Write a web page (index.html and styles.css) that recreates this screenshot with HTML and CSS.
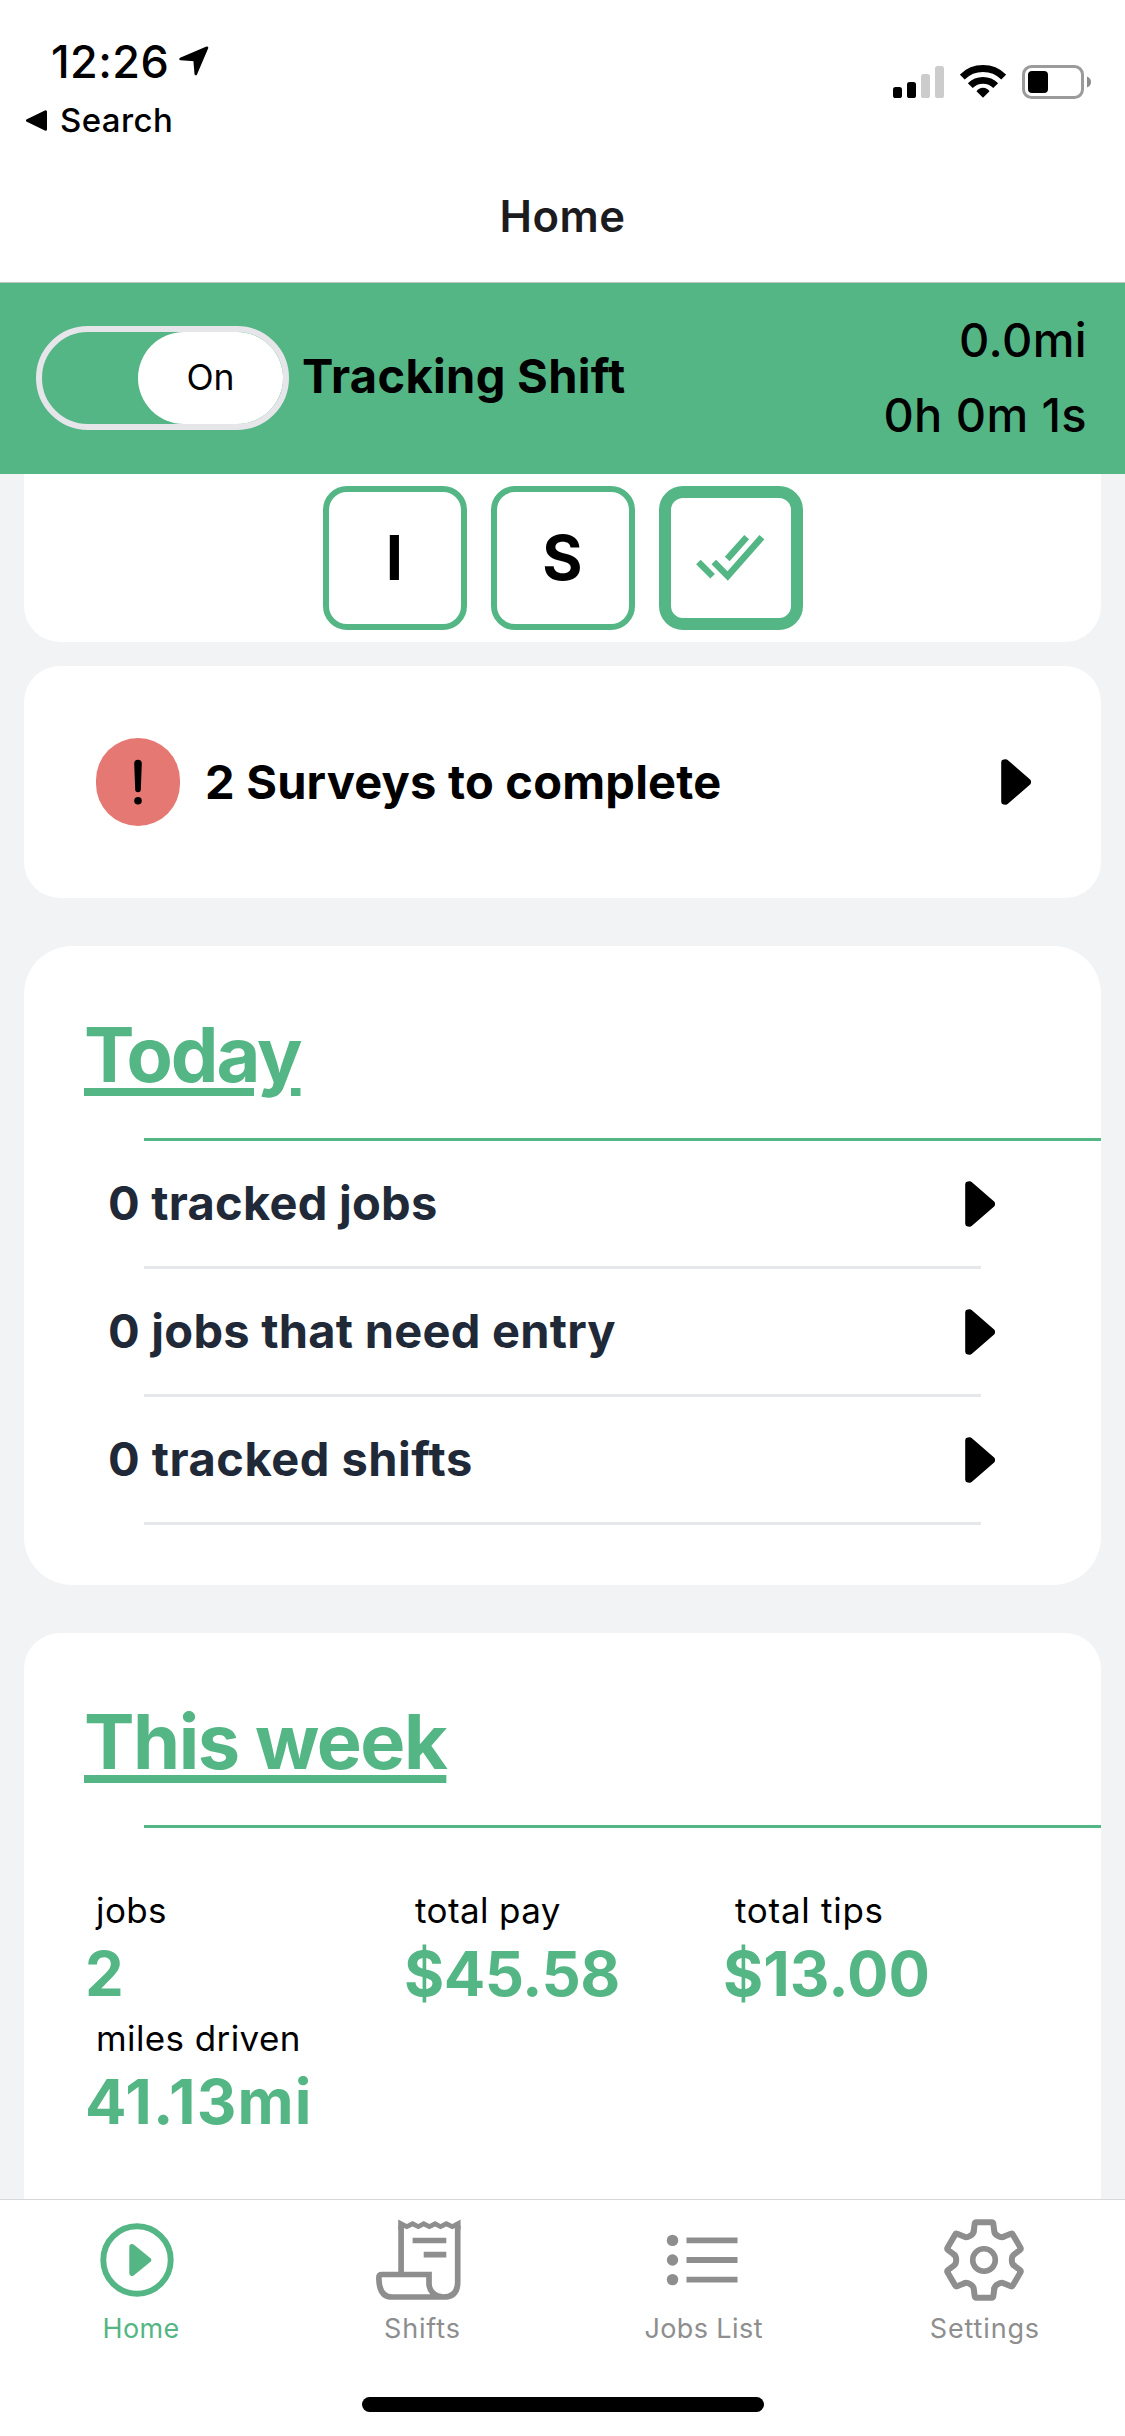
FILE: index.html
```
<!DOCTYPE html>
<html lang="en">
<head>
<meta charset="utf-8">
<title>Home</title>
<link rel="stylesheet" href="styles.css">
</head>
<body>
<svg class="defs" width="0" height="0">
  <symbol id="play" viewBox="0 0 30 46"><path d="M3 3.2L4.8 3L27 22.300Q27.6 23 27 23.700L4.800 43L3 42.8Z" stroke="currentColor" stroke-width="5.6" stroke-linejoin="round" fill="currentColor"/></symbol>
</svg>

<header class="header">
  <div class="status">
    <div class="status-left">
      <div class="clock">
        <span>12:26</span>
        <svg width="30" height="30" viewBox="0 0 30 30"><path d="M1.6 13L28 1.8L16.8 28L15.6 14Z" stroke="#000" stroke-width="2.6" stroke-linejoin="round"/></svg>
      </div>
      <div class="back">
        <svg width="21" height="21" viewBox="0 0 21 21"><path d="M1.5 10.5L19.5 1.8V19.2Z" stroke="#000" stroke-width="3" stroke-linejoin="round"/></svg>
        <span>Search</span>
      </div>
    </div>
    <div class="status-right">
      <svg width="51" height="32" viewBox="0 0 51 32"><rect y="21" width="9" height="11" rx="2.6"/><rect x="14" y="16" width="9" height="16" rx="2.6"/><rect x="28" y="8" width="9" height="24" rx="2.6" fill="#ccc"/><rect x="42" width="9" height="32" rx="2.6" fill="#ccc"/></svg>
      <svg width="46" height="33" viewBox="0 0 46 33"><g fill="none" stroke="#000" stroke-width="6.9"><path d="M2.3 12A29.5 29.5 0 0 1 43.7 12"/><path d="M10.3 20.6A18 18 0 0 1 35.7 20.6"/></g><path d="M23 32.8L16.5 26.3Q18.8 22.8 23 22.8T29.5 26.3Z"/></svg>
      <svg width="70" height="34" viewBox="0 0 70 34"><rect x="1.5" y="1.5" width="59" height="31" rx="8" fill="none" stroke="#9b9b9b" stroke-width="3"/><rect x="6" y="6" width="20" height="22" rx="4"/><path d="M65 11.5Q69 13 69 17T65 22.5Z" fill="#8c8c8c"/></svg>
    </div>
  </div>
  <h1 class="title">Home</h1>
</header>

<section class="tracker">
  <div class="toggle"><div class="knob">On</div></div>
  <div class="tracker-label">Tracking Shift</div>
  <div class="tracker-stats"><div>0.0mi</div><div>0h 0m 1s</div></div>
</section>

<main class="content">
  <section class="card quick">
    <div class="tile">I</div>
    <div class="tile">S</div>
    <div class="tile selected">
      <svg width="69" height="46" viewBox="0 0 69 46" fill="none" stroke="currentColor" stroke-width="6.5"><path d="M17.8 27L31.7 41L65.9 2.2"/><path d="M2.4 27L16.6 41.2"/><path d="M50.7 2.2L31.2 24"/></svg>
    </div>
  </section>

  <section class="card surveys">
    <div class="alert"><svg width="10" height="46" viewBox="0 0 10 46"><path d="M1.2 4.5A3.8 3.8 0 0 1 8.8 4.500L7.800 30.500A2.800 2.800 0 0 1 2.200 30.500Z"/><circle cx="5" cy="41.700" r="3.800"/></svg></div>
    <div class="surveys-text">2 Surveys to complete</div>
    <svg class="arrow" width="30" height="46"><use href="#play"/></svg>
  </section>

  <section class="card today">
    <h2 class="heading">Today</h2>
    <div class="rule"></div>
    <div class="row"><span>0 tracked jobs</span><svg class="arrow" width="30" height="46"><use href="#play"/></svg></div>
    <div class="row"><span>0 jobs that need entry</span><svg class="arrow" width="30" height="46"><use href="#play"/></svg></div>
    <div class="row"><span class="shifts">0 tracked shifts</span><svg class="arrow" width="30" height="46"><use href="#play"/></svg></div>
  </section>

  <section class="card week">
    <h2 class="heading">This week</h2>
    <div class="rule"></div>
    <div class="stats">
      <div class="stat"><div class="label">jobs</div><div class="value">2</div></div>
      <div class="stat"><div class="label">total pay</div><div class="value pay">$45.58</div></div>
      <div class="stat"><div class="label tips">total tips</div><div class="value">$13.00</div></div>
      <div class="stat"><div class="label">miles driven</div><div class="value miles">41.13mi</div></div>
    </div>
  </section>
</main>

<nav class="tabs">
  <div class="tab active">
    <svg class="tab-home" width="86" height="84" viewBox="-43 -42 86 84"><circle r="33.7" fill="none" stroke="currentColor" stroke-width="5.9"/><path d="M-5 -13.3L11.5 0L-5 13.3Z" fill="currentColor" stroke="currentColor" stroke-width="5.4" stroke-linejoin="round"/></svg>
    <span>Home</span>
  </div>
  <div class="tab">
    <svg class="tab-shifts" width="86" height="84" viewBox="0 -1.5 86 84"><path fill="currentColor" d="M22.2 0L30.8 4.5L36.6 1.5L42.3 4.5L47.7 1.5L53.4 4.5L59.1 1.5L64.5 4.5L70.3 1.5L76.3 4.5L84.6 0V10L79 8.5L76.3 9.8L70.3 6.9L64.5 9.8L59.1 6.9L53.4 9.8L47.7 6.9L42.3 9.8L36.6 6.9L30.8 9.8L28 8.5L22.2 10Z"/><path fill="none" stroke="currentColor" stroke-width="5.7" d="M25.1 6V55M81.7 6V62.5Q81.7 77.5 67.5 77.5H16Q3.5 77.5 2.9 60V58Q2.9 55 5.9 55H53V64C53 71 58.5 77.5 67.5 77.5M36.6 21H70.3M47.7 35.2H70.3"/></svg>
    <span>Shifts</span>
  </div>
  <div class="tab">
    <svg width="86" height="84" viewBox="-44 -42 86 84"><g fill="currentColor"><circle cx="-31.5" cy="-19.6" r="5.7"/><circle cx="-31.5" r="5.7"/><circle cx="-31.5" cy="19.6" r="5.7"/></g><path d="M-17.5 -19.6H33.5M-17.5 0H33.5M-17.5 19.6H33.5" stroke="currentColor" stroke-width="5.9"/></svg>
    <span class="wide">Jobs List</span>
  </div>
  <div class="tab">
    <svg width="86" height="84" viewBox="-43 -42 86 84" fill="none" stroke="currentColor" stroke-width="6" stroke-linecap="round" stroke-linejoin="round">
      <defs><path id="tooth" d="M-10.3 -28.5L-9.3 -36.4Q-9 -37.7 -7.7 -37.7H7.7Q9 -37.7 9.3 -36.4L10.3 -28.5Q10.6 -26 13.9 -24.1Q17.2 -22.1 19.5 -23.2"/></defs>
      <use href="#tooth"/><use href="#tooth" transform="rotate(60)"/><use href="#tooth" transform="rotate(120)"/><use href="#tooth" transform="rotate(180)"/><use href="#tooth" transform="rotate(240)"/><use href="#tooth" transform="rotate(300)"/>
      <circle r="11.3" stroke-width="5.6"/>
    </svg>
    <span>Settings</span>
  </div>
</nav>
<div class="home-indicator"></div>
</body>
</html>
```

FILE: styles.css
```
* { box-sizing: border-box; }

body {
  margin: 0;
  width: 1125px;
  height: 2436px;
  display: flex;
  flex-direction: column;
  overflow: hidden;
  background: #fff;
  color: #000;
  font-family: Inter, "Liberation Sans", sans-serif;
}

svg { display: block; flex: none; }
.defs { position: absolute; }

/* Status bar and title */
.header {
  height: 283px;
  border-bottom: 1px solid #bfc6c2;
}
.status {
  display: flex;
  justify-content: space-between;
  padding: 34px 33px 0 26px;
}
.clock {
  display: flex;
  gap: 10px;
  padding-left: 25px;
  font-size: 45px;
  font-weight: 550;
  line-height: 55px;
  letter-spacing: 0.4px;
}
.clock svg { margin-top: 12px; }
.back {
  display: flex;
  align-items: center;
  gap: 13px;
  margin-top: 11px;
  font-size: 33px;
  font-weight: 450;
  line-height: 40px;
  letter-spacing: 0.4px;
}
.status-right {
  display: flex;
  gap: 16px;
  padding-top: 31px;
}
.status-right svg:first-child { margin-top: 1px; }
.title {
  margin: 50px 0 0;
  color: #1c1c1e;
  font-size: 43.6px;
  font-weight: 600;
  line-height: 54px;
  letter-spacing: 0.53px;
  text-align: center;
}

/* Shift tracking bar */
.tracker {
  flex: none;
  display: flex;
  align-items: center;
  height: 191px;
  padding: 0 38px 1px 36px;
  background: #55b685;
}
.toggle {
  display: flex;
  justify-content: flex-end;
  width: 253px;
  height: 104px;
  border: 6px solid #e5e5ea;
  border-radius: 52px;
}
.knob {
  width: 145px;
  border-radius: 46px;
  background: #fff;
  font-size: 35.5px;
  line-height: 92px;
  text-align: center;
}
.tracker-label {
  flex: 1;
  margin-top: -4px;
  padding-left: 13px;
  font-size: 47px;
  font-weight: 700;
  line-height: 60px;
  letter-spacing: 0.32px;
}
.tracker-stats {
  margin-top: -2px;
  font-size: 47px;
  font-weight: 550;
  line-height: 75px;
  letter-spacing: 0.38px;
  text-align: right;
}

/* Scrolling content */
.content {
  flex: 1;
  min-height: 0;
  overflow: hidden;
  padding: 0 24px;
  background: #f2f3f5;
}
.card {
  background: #fff;
  border-radius: 36px;
}
.quick {
  display: flex;
  justify-content: center;
  gap: 24px;
  height: 168px;
  padding-top: 12px;
  border-radius: 0 0 36px 36px;
}
.tile {
  display: flex;
  align-items: center;
  justify-content: center;
  width: 144px;
  height: 144px;
  padding-bottom: 1px;
  border: 6px solid #55b685;
  border-radius: 24px;
  font-size: 61.5px;
  font-weight: 700;
}
.selected {
  border-width: 12px;
  color: #55b685;
}
.surveys {
  display: flex;
  align-items: center;
  height: 232px;
  margin-top: 24px;
  padding: 0 70px 0 72px;
}
.alert {
  display: flex;
  align-items: center;
  justify-content: center;
  width: 84px;
  height: 88px;
  border-radius: 44px;
  background: #e57873;
}
.surveys-text {
  flex: 1;
  padding-left: 25px;
  font-size: 47px;
  font-weight: 700;
  line-height: 60px;
  letter-spacing: 0.21px;
}
.heading {
  margin: 0;
  padding-left: 60px;
  color: #55b685;
  font-size: 75.7px;
  font-weight: 700;
  line-height: 90px;
  letter-spacing: -1.5px;
  text-decoration: underline;
  text-decoration-thickness: 8px;
  text-underline-offset: 6px;
}
.rule {
  height: 3px;
  margin: 38px 0 0 120px;
  background: #55b685;
}
.today {
  height: 639px;
  margin-top: 48px;
  padding-top: 64px;
  border-radius: 48px;
}
.today .heading { letter-spacing: -2.1px; }
.row {
  display: flex;
  align-items: center;
  justify-content: space-between;
  height: 128px;
  padding: 0 106px 3px 84px;
  background: linear-gradient(#e5e7eb, #e5e7eb) 120px 100% / 837px 3px no-repeat;
  color: #1f2937;
  font-size: 47px;
  font-weight: 700;
  line-height: 60px;
  letter-spacing: 0.25px;
}
.row span { margin-bottom: 2px; }
.row .shifts { letter-spacing: 0.5px; }
.row .arrow { color: #000; }
.week {
  height: 700px;
  margin-top: 48px;
  padding-top: 64px;
}
.stats {
  display: grid;
  grid-template-columns: repeat(3, 319px);
  grid-auto-rows: 128px;
  padding: 58px 0 0 60px;
}
.label {
  padding-left: 12px;
  font-size: 35px;
  line-height: 48px;
  letter-spacing: 0.4px;
}
.tips {
  padding-left: 13px;
  letter-spacing: 0.73px;
}
.value {
  margin-top: 4px;
  padding-left: 1px;
  color: #55b685;
  font-size: 61.5px;
  font-weight: 700;
  line-height: 72px;
}
.pay { letter-spacing: -0.6px; }
.miles { letter-spacing: 1.1px; }

/* Tab bar */
.tabs {
  flex: none;
  display: flex;
  height: 198px;
  border-top: 1px solid #d8d8d8;
}
.tab {
  flex: 1;
  display: flex;
  flex-direction: column;
  align-items: center;
  padding-top: 18px;
  color: #8e8e8f;
  font-size: 27px;
  line-height: 34px;
  letter-spacing: 0.84px;
}
.tab span { margin: 10px 0 0 1px; }
.tab .wide { letter-spacing: 0.4px; }
.tab-home { margin-right: 7px; }
.tab-shifts { margin-right: 6px; }
.active {
  color: #55b685;
  letter-spacing: 0.4px;
}
.home-indicator {
  flex: none;
  width: 402px;
  height: 15px;
  margin: 0 auto 24px;
  border-radius: 8px;
  background: #000;
}
```
